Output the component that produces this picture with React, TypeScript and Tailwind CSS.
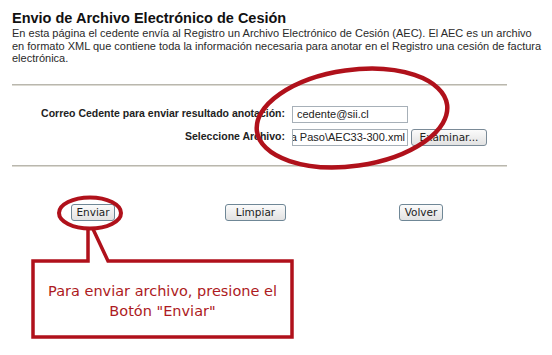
export default function App() {
  return (
    <div className="relative h-[355px] w-[552px] overflow-hidden bg-white font-['Liberation_Sans',Arial,sans-serif] text-[#1c1c1c]">
      {/* header */}
      <div className="pl-[12px] pt-[10px]">
        <h1 className="text-[14.5px] font-bold leading-[17px] text-[#111]">
          Envio de Archivo Electrónico de Cesión
        </h1>
        <p className="whitespace-nowrap text-[11px] leading-[12.5px] text-[#2a2a2a]">
          En esta página el cedente envía al Registro un Archivo Electrónico de Cesión (AEC). El AEC es un archivo
          <br />
          en formato XML que contiene toda la información necesaria para anotar en el Registro una cesión de factura
          <br />
          electrónica.
        </p>
      </div>

      <div className="ml-[12px] mt-[19px] h-[2px] w-[495px] border-t border-[#b9b7ae] bg-[#dcdad2]" />

      {/* form */}
      <div className="mt-[20px] flex flex-col gap-[6px]">
        <div className="flex items-center">
          <span className="w-[285px] text-right text-[10.5px] font-bold text-[#222]">
            Correo Cedente para enviar resultado anotación:
          </span>
          <div className="ml-[7px] flex h-[17px] w-[116px] items-center border border-[#a7b0b8] bg-white pl-[4px] text-[11px] text-[#222]">
            cedente@sii.cl
          </div>
        </div>
        <div className="flex items-center">
          <span className="w-[285px] text-right text-[10.5px] font-bold text-[#222]">
            Seleccione Archivo:
          </span>
          <div className="ml-[7px] flex h-[17px] w-[116px] items-center justify-end overflow-hidden whitespace-nowrap border border-[#a7b0b8] bg-white pr-[2px] text-[11px] text-[#222]">
            C:\Paso a Paso\AEC33-300.xml
          </div>
          <button className="ml-[3px] h-[17px] w-[76px] rounded-[3px] border border-[#7a8a97] bg-gradient-to-b from-[#fbfbfb] to-[#e2e2e2] font-['DejaVu_Sans',sans-serif] text-[10.5px] leading-none text-[#222]">
            Examinar...
          </button>
        </div>
      </div>

      <div className="ml-[12px] mt-[19px] h-[2px] w-[495px] border-t border-[#b9b7ae] bg-[#dcdad2]" />

      {/* actions */}
      <div className="mt-[37px] flex font-['DejaVu_Sans',sans-serif] text-[10.5px] text-[#222]">
        <button className="ml-[71px] h-[17px] w-[44px] rounded-[3px] border border-[#6f8796] bg-gradient-to-b from-[#fbfbfb] to-[#e2e2e2] leading-none">
          Enviar
        </button>
        <button className="ml-[110px] h-[17px] w-[61px] rounded-[3px] border border-[#6f8796] bg-gradient-to-b from-[#fbfbfb] to-[#e2e2e2] leading-none">
          Limpiar
        </button>
        <button className="ml-[113px] h-[17px] w-[44px] rounded-[3px] border border-[#6f8796] bg-gradient-to-b from-[#fbfbfb] to-[#e2e2e2] leading-none">
          Volver
        </button>
      </div>

      {/* red annotations drawn over the page */}
      <svg className="pointer-events-none absolute left-0 top-0" width="552" height="355" viewBox="0 0 552 355">
        <ellipse cx="352" cy="118" rx="96" ry="48" transform="rotate(-8 352 118)" fill="none" stroke="#b0111b" strokeWidth="4.5" />
        <ellipse cx="90" cy="213" rx="31" ry="15.5" fill="none" stroke="#b0111b" strokeWidth="4" />
        <path d="M88 228 L88 261 L33 261 L33 337 L292 337 L292 261 L108 261 L93 229" fill="none" stroke="#b0111b" strokeWidth="3.5" strokeLinejoin="miter" />
      </svg>

      <div className="absolute left-[33px] top-[261px] flex h-[76px] w-[259px] flex-col items-center justify-center pt-[3px] text-center font-['DejaVu_Sans',sans-serif] text-[14.5px] leading-[20px] text-[#ad1a22]">
        <span>Para enviar archivo, presione el</span>
        <span>Botón "Enviar"</span>
      </div>
    </div>
  );
}
